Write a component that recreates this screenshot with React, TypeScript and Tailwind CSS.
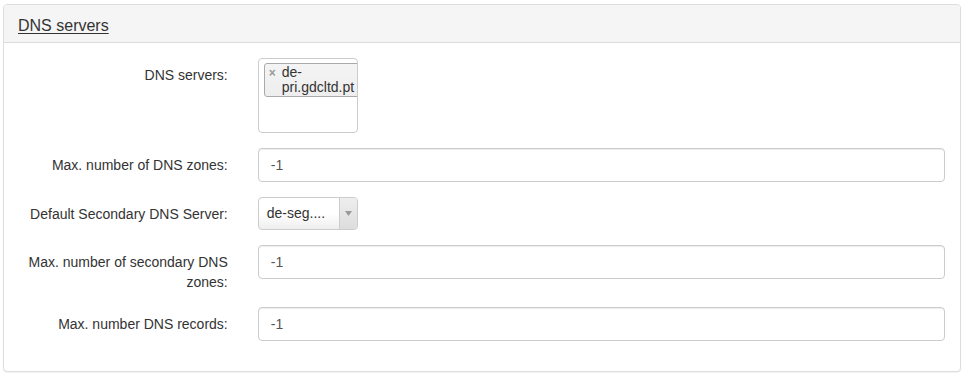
import React from "react";

const font = { fontFamily: '"Liberation Sans", Arial, sans-serif' };

function Label({ children }: { children: React.ReactNode }) {
  return (
    <div className="w-[238.75px] shrink-0 px-[15px] pt-[7px] text-right text-[14px] leading-[20px] text-[#333]">
      {children}
    </div>
  );
}

function TextInput({ value }: { value: string }) {
  return (
    <div className="flex-1 px-[15px]">
      <div className="flex h-[34px] items-center rounded-[4px] border border-[#ccc] bg-white px-[12px] text-[14px] text-[#555] shadow-[inset_0_1px_1px_rgba(0,0,0,0.075)]">
        {value}
      </div>
    </div>
  );
}

export default function App() {
  return (
    <div className="min-h-[375px] bg-white pl-[3px] pr-[3px] pt-[4px]" style={font}>
      <div className="w-[958px] rounded-[4px] border border-[#ddd] bg-white shadow-[0_1px_1px_rgba(0,0,0,0.05)]">
        <div className="h-[38px] rounded-t-[3px] border-b border-[#ddd] bg-[#f5f5f5] px-[14px] pt-[9px]">
          <span className="text-[16px] leading-[18px] text-[#333] underline underline-offset-[2px]">DNS servers</span>
        </div>
        <div className="flex flex-col gap-[15px] pb-[30px] pt-[15px]">
          <div className="flex">
            <Label>DNS servers:</Label>
            <div className="flex-1 px-[15px]">
              <div className="h-[75px] w-[100px] overflow-hidden rounded-[4px] border border-[#ccc] bg-white">
                <div className="ml-[5px] mt-[4px] flex w-[120px] items-start rounded-[3px] border border-[#aaa] bg-gradient-to-b from-[#f4f4f4] to-[#eee] py-[1px] pl-[4px] text-[14px] leading-[15px] text-[#333]">
                  <span className="mr-[6px] mt-[3px] text-[12px] font-bold leading-[10px] text-[#999]">×</span>
                  <span>
                    de-
                    <br />
                    pri.gdcltd.pt
                  </span>
                </div>
              </div>
            </div>
          </div>
          <div className="flex">
            <Label>Max. number of DNS zones:</Label>
            <TextInput value="-1" />
          </div>
          <div className="flex">
            <Label>Default Secondary DNS Server:</Label>
            <div className="flex-1 px-[15px]">
              <div className="flex h-[33px] w-[100px] overflow-hidden rounded-[4px] border border-[#ccc] bg-gradient-to-b from-white from-50% to-[#eee] text-[14px] text-[#333]">
                <div className="flex flex-1 items-center pl-[8px]">de-seg....</div>
                <div className="flex w-[18px] items-center justify-center border-l border-[#ccc] bg-gradient-to-b from-[#eee] to-[#ddd]">
                  <svg width="7" height="5" viewBox="0 0 7 5">
                    <path d="M0 0 L7 0 L3.5 5 Z" fill="#999" />
                  </svg>
                </div>
              </div>
            </div>
          </div>
          <div className="flex">
            <Label>
              Max. number of secondary DNS
              <br />
              zones:
            </Label>
            <TextInput value="-1" />
          </div>
          <div className="flex">
            <Label>Max. number DNS records:</Label>
            <TextInput value="-1" />
          </div>
        </div>
      </div>
    </div>
  );
}
